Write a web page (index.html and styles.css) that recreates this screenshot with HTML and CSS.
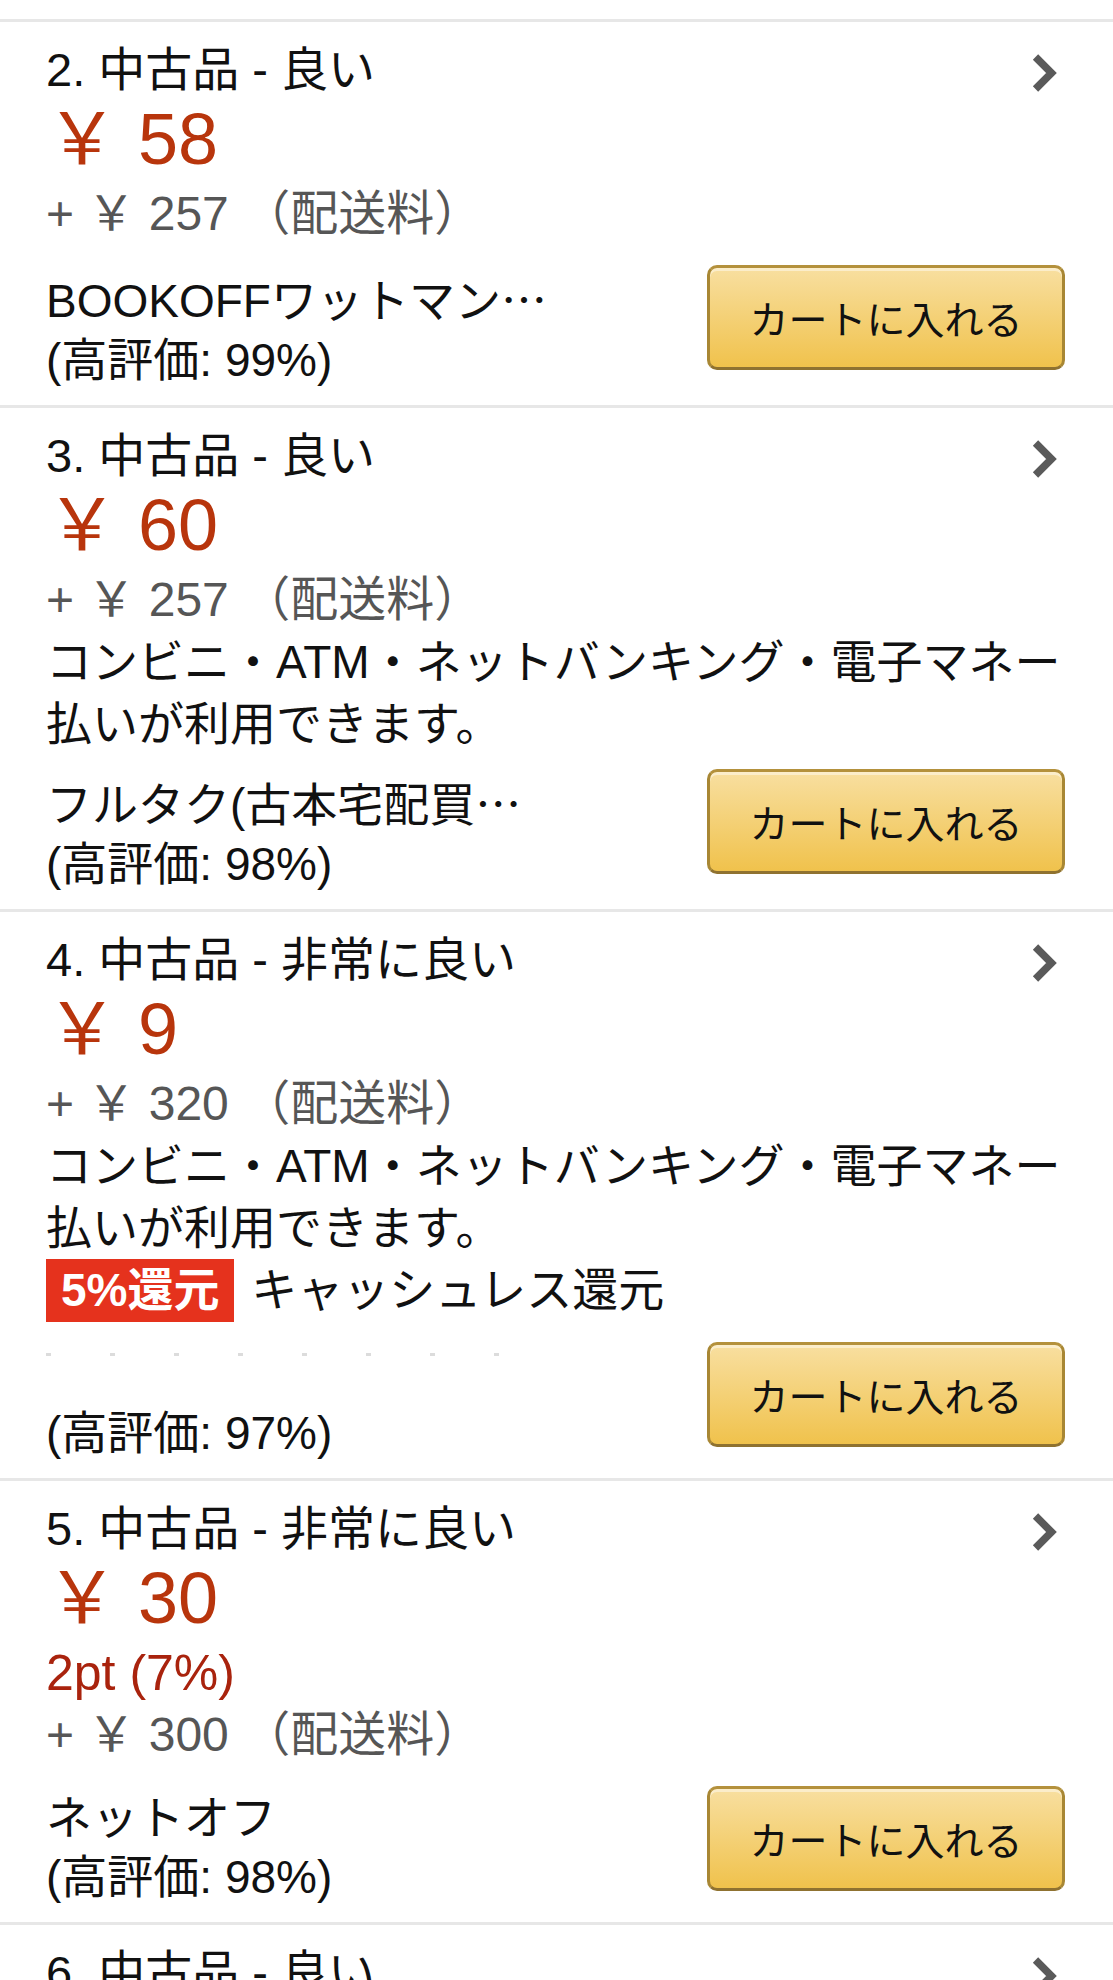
FILE: index.html
```html
<!DOCTYPE html>
<html lang="ja">
<head>
    <meta charset="UTF-8">
    <meta name="viewport" content="width=device-width, initial-scale=1.0">
    <title>出品者一覧</title>
    <link rel="stylesheet" href="styles.css">
</head>
<body>
    <div class="offer-list">
        <div class="offer offer-stub"></div>

        <div class="offer">
            <div class="offer-head">
                <span class="condition">2. 中古品 - 良い</span>
                <svg class="chevron" viewBox="0 0 26 40"><path d="M4 4 L20 20 L4 36"/></svg>
            </div>
            <div class="price">￥ 58</div>
            <div class="shipping">+ ￥ 257 （配送料）</div>
            <div class="seller-row">
                <div class="seller">
                    <div class="seller-name">BOOKOFFワットマン<span class="ellip">…</span></div>
                    <div class="rating">(高評価: 99%)</div>
                </div>
                <button class="cart-btn">カートに入れる</button>
            </div>
        </div>

        <div class="offer">
            <div class="offer-head">
                <span class="condition">3. 中古品 - 良い</span>
                <svg class="chevron" viewBox="0 0 26 40"><path d="M4 4 L20 20 L4 36"/></svg>
            </div>
            <div class="price">￥ 60</div>
            <div class="shipping">+ ￥ 257 （配送料）</div>
            <p class="pay-note">コンビニ・ATM・ネットバンキング・電子マネー<br>払いが利用できます。</p>
            <div class="seller-row">
                <div class="seller">
                    <div class="seller-name">フルタク(古本宅配買<span class="ellip">…</span></div>
                    <div class="rating">(高評価: 98%)</div>
                </div>
                <button class="cart-btn">カートに入れる</button>
            </div>
        </div>

        <div class="offer">
            <div class="offer-head">
                <span class="condition">4. 中古品 - 非常に良い</span>
                <svg class="chevron" viewBox="0 0 26 40"><path d="M4 4 L20 20 L4 36"/></svg>
            </div>
            <div class="price">￥ 9</div>
            <div class="shipping">+ ￥ 320 （配送料）</div>
            <p class="pay-note">コンビニ・ATM・ネットバンキング・電子マネー<br>払いが利用できます。</p>
            <div class="cashless"><span class="badge">5%還元</span> キャッシュレス還元</div>
            <div class="seller-row">
                <div class="seller">
                    <div class="seller-name seller-masked"><div class="mask-strip"></div></div>
                    <div class="rating">(高評価: 97%)</div>
                </div>
                <button class="cart-btn">カートに入れる</button>
            </div>
        </div>

        <div class="offer">
            <div class="offer-head">
                <span class="condition">5. 中古品 - 非常に良い</span>
                <svg class="chevron" viewBox="0 0 26 40"><path d="M4 4 L20 20 L4 36"/></svg>
            </div>
            <div class="price">￥ 30</div>
            <div class="points">2pt (7%)</div>
            <div class="shipping">+ ￥ 300 （配送料）</div>
            <div class="seller-row">
                <div class="seller">
                    <div class="seller-name">ネットオフ</div>
                    <div class="rating">(高評価: 98%)</div>
                </div>
                <button class="cart-btn">カートに入れる</button>
            </div>
        </div>

        <div class="offer">
            <div class="offer-head">
                <span class="condition">6. 中古品 - 良い</span>
                <svg class="chevron" viewBox="0 0 26 40"><path d="M4 4 L20 20 L4 36"/></svg>
            </div>
        </div>
    </div>
</body>
</html>
```

FILE: styles.css
```css
:root {
    --text-color: #111;
    --muted-color: #565656;
    --price-color: #b8350c;
    --points-color: #a9230d;
    --rule-color: #e7e7e7;
}

* {
    box-sizing: border-box;
}

body {
    margin: 0;
    background-color: #fff;
    color: var(--text-color);
    font-family: "Liberation Sans", "Noto Sans CJK JP", sans-serif;
    font-size: 46px;
    line-height: 62px;
}

.offer {
    padding: 17px 48px 15px 46px;
    border-bottom: 3px solid var(--rule-color);
}

.offer-stub {
    height: 22px;
    padding: 0;
}

.offer-head {
    display: flex;
    justify-content: space-between;
    align-items: center;
}

.condition {
    font-size: 47px;
}

.chevron {
    width: 27px;
    height: 40px;
    margin: 5px 7px 0 0;
    fill: none;
    stroke: #5a5a5a;
    stroke-width: 7.5;
}

.price {
    color: var(--price-color);
    font-size: 72px;
    line-height: 76px;
    padding-bottom: 6px;
}

.points {
    color: var(--points-color);
    font-size: 50px;
}

.shipping {
    color: var(--muted-color);
    font-size: 48px;
}

.pay-note {
    margin: 0;
}

.cashless {
    line-height: 63px;
}

.badge {
    display: inline-block;
    background-color: #e5321d;
    color: #fff;
    font-weight: bold;
    padding: 0 15px;
    margin-right: 4px;
}

.seller-row {
    display: flex;
    justify-content: space-between;
    align-items: flex-start;
    margin-top: 23px;
    line-height: 59px;
}

.pay-note + .seller-row {
    margin-top: 17px;
}

.seller {
    min-width: 0;
}

.ellip {
    font-family: "Noto Sans CJK JP", sans-serif;
}

.seller-masked {
    height: 59px;
    padding-top: 8px;
}

.mask-strip {
    width: 460px;
    height: 3px;
    background: repeating-linear-gradient(90deg, #dcdcdc 0 5px, transparent 5px 64px);
}

.cart-btn {
    width: 358px;
    height: 105px;
    margin-top: -3px;
    border: 3px solid #a88734;
    border-color: #b4913c #a88734 #8f7230;
    border-radius: 10px;
    background: linear-gradient(to bottom, #f8dfa0, #f0c24c);
    box-shadow: inset 0 3px 0 rgba(255, 255, 255, 0.45);
    color: var(--text-color);
    font-family: "Noto Sans CJK JP", sans-serif;
    font-size: 39px;
    line-height: 1;
    cursor: pointer;
}
```
